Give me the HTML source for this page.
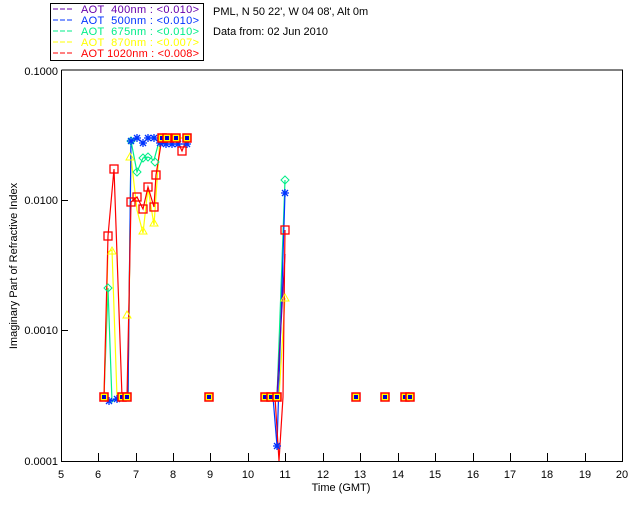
<!DOCTYPE html>
<html><head><style>
html,body{margin:0;padding:0;background:#fff;width:640px;height:512px;overflow:hidden}
svg{display:block}
text{font-family:"Liberation Sans",sans-serif;font-size:11px}
</style></head><body>
<svg width="640" height="512" viewBox="0 0 640 512">
<defs>
<g id="sq"><rect x="-4" y="-4" width="8" height="8" fill="#ff0" stroke="#f00" stroke-width="1.5"/><rect x="-2" y="-2" width="4" height="4" fill="#00c"/></g>
<g id="rs"><rect x="-4" y="-4" width="8" height="8" fill="none" stroke="#f00" stroke-width="1.3"/></g>
<g id="st"><path d="M-4 0H4M0-4V4M-3-3L3 3M-3 3L3-3" stroke="#0033ff" stroke-width="1.3"/></g>
</defs>
<!-- legend -->
<rect x="50.5" y="3.5" width="153" height="57" fill="#fff" stroke="#000"/>
<g font-size="11">
<line x1="53" y1="9" x2="73" y2="9" stroke="#6600aa" stroke-dasharray="5,2"/><text x="81" y="13" fill="#6600aa" textLength="118" lengthAdjust="spacing" xml:space="preserve">AOT  400nm : &lt;0.010&gt;</text>
<line x1="53" y1="20" x2="73" y2="20" stroke="#0033ff" stroke-dasharray="5,2"/><text x="81" y="24" fill="#0033ff" textLength="118" lengthAdjust="spacing" xml:space="preserve">AOT  500nm : &lt;0.010&gt;</text>
<line x1="53" y1="31" x2="73" y2="31" stroke="#00ee88" stroke-dasharray="5,2"/><text x="81" y="35" fill="#00ee88" textLength="118" lengthAdjust="spacing" xml:space="preserve">AOT  675nm : &lt;0.010&gt;</text>
<line x1="53" y1="42" x2="73" y2="42" stroke="#ffff00" stroke-dasharray="5,2"/><text x="81" y="46" fill="#ffff00" textLength="118" lengthAdjust="spacing" xml:space="preserve">AOT  870nm : &lt;0.007&gt;</text>
<line x1="53" y1="53" x2="73" y2="53" stroke="#ff0000" stroke-dasharray="5,2"/><text x="81" y="57" fill="#ff0000" textLength="118" lengthAdjust="spacing" xml:space="preserve">AOT 1020nm : &lt;0.008&gt;</text>
</g>
<text x="213" y="15">PML, N 50 22', W 04 08', Alt 0m</text>
<text x="213" y="35">Data from: 02 Jun 2010</text>
<!-- axes -->
<path d="M61.5 70V461.5H622.5V70H61.5" fill="none" stroke="#000" stroke-width="1"/>
<g stroke="#000">
<path d="M61 200.5h7M61 330.5h7"/>
<path d="M98.5 461v-8M136.5 461v-8M173.5 461v-8M210.5 461v-8M248.5 461v-8M285.5 461v-8M323.5 461v-8M360.5 461v-8M398.5 461v-8M435.5 461v-8M473.5 461v-8M510.5 461v-8M547.5 461v-8M585.5 461v-8"/>
</g>
<g text-anchor="end" font-size="11">
<text x="58" y="75">0.1000</text><text x="58" y="204">0.0100</text><text x="58" y="334">0.0010</text><text x="58" y="465">0.0001</text>
</g>
<g text-anchor="middle" font-size="11">
<text x="61" y="478">5</text><text x="98" y="478">6</text><text x="136" y="478">7</text><text x="173" y="478">8</text><text x="210" y="478">9</text><text x="248" y="478">10</text><text x="285" y="478">11</text><text x="323" y="478">12</text><text x="360" y="478">13</text><text x="398" y="478">14</text><text x="435" y="478">15</text><text x="473" y="478">16</text><text x="510" y="478">17</text><text x="547" y="478">18</text><text x="585" y="478">19</text><text x="622" y="478">20</text>
<text x="341" y="491">Time (GMT)</text>
</g>
<text transform="translate(17,266) rotate(-90)" text-anchor="middle" font-size="11">Imaginary Part of Refractive Index</text>
<!-- series -->
<g fill="none" stroke-width="1.2">
<polyline stroke="#00ee88" points="104,397 108,288 112,402 117,397 123,397 128,397 131,141 137,172 143,158 148,157 154,160 160,138 167,138 176,138 187,138"/>
<polyline stroke="#ffff00" points="104,397 108,252 112,250 117,397 128,397 131,157 137,210 143,233 148,188 154,225 160,138 187,138"/>
<polyline stroke="#0033ff" points="104,397 109,401 117,399 123,397 128,397 131,141 137,138 143,143 148,138 154,138 160,143 166,144 172,144 178,144 187,144"/>
<polyline stroke="#ff0000" points="104,397 108,236 114,169 122,397 127,397 131,202 137,197 143,209 148,187 154,207 156,175 162,138 167,138 176,138 182,151 187,138"/>
<polyline stroke="#00ee88" points="277,397 285,180"/>
<polyline stroke="#0033ff" points="273,397 277,446 285,193"/>
<polyline stroke="#ffff00" points="279,397 285,298"/>
<polyline stroke="#6600aa" points="277,395 285,254"/>
<polyline stroke="#ff0000" points="265,397 275,397 279,461 283,397 285,230"/>
</g>
<g fill="none" stroke-width="1">
<path d="M127 311l4 7h-8z M143 227l4 7h-8z M154 219l4 7h-8z M130 153l4 7h-8z M285 294l4 7h-8z M112 247l4 7h-8z" stroke="#ff0"/>
<path d="M137 168l4 4-4 4-4-4z M143 154l4 4-4 4-4-4z M148 153l4 4-4 4-4-4z M155 158l4 4-4 4-4-4z M131 137l4 4-4 4-4-4z M285 176l4 4-4 4-4-4z M108 284l4 4-4 4-4-4z" stroke="#00ee88"/>
</g>
<use href="#st" x="109" y="401"/><use href="#st" x="117" y="399"/><use href="#st" x="131" y="141"/><use href="#st" x="137" y="138"/><use href="#st" x="143" y="143"/><use href="#st" x="148" y="138"/><use href="#st" x="154" y="138"/><use href="#st" x="160" y="143"/><use href="#st" x="166" y="144"/><use href="#st" x="172" y="144"/><use href="#st" x="178" y="144"/><use href="#st" x="187" y="144"/><use href="#st" x="285" y="193"/><use href="#st" x="277" y="446"/>
<use href="#rs" x="108" y="236"/><use href="#rs" x="114" y="169"/><use href="#rs" x="131" y="202"/><use href="#rs" x="137" y="197"/><use href="#rs" x="143" y="209"/><use href="#rs" x="148" y="187"/><use href="#rs" x="154" y="207"/><use href="#rs" x="156" y="175"/><use href="#rs" x="182" y="151"/><use href="#rs" x="285" y="230"/>
<use href="#sq" x="162" y="138"/><use href="#sq" x="167" y="138"/><use href="#sq" x="176" y="138"/><use href="#sq" x="187" y="138"/>
<use href="#sq" x="104" y="397"/><use href="#sq" x="122" y="397"/><use href="#sq" x="127" y="397"/><use href="#sq" x="209" y="397"/><use href="#sq" x="265" y="397"/><use href="#sq" x="271" y="397"/><use href="#sq" x="277" y="397"/><use href="#sq" x="356" y="397"/><use href="#sq" x="385" y="397"/><use href="#sq" x="405" y="397"/><use href="#sq" x="410" y="397"/>
</svg>
</body></html>
